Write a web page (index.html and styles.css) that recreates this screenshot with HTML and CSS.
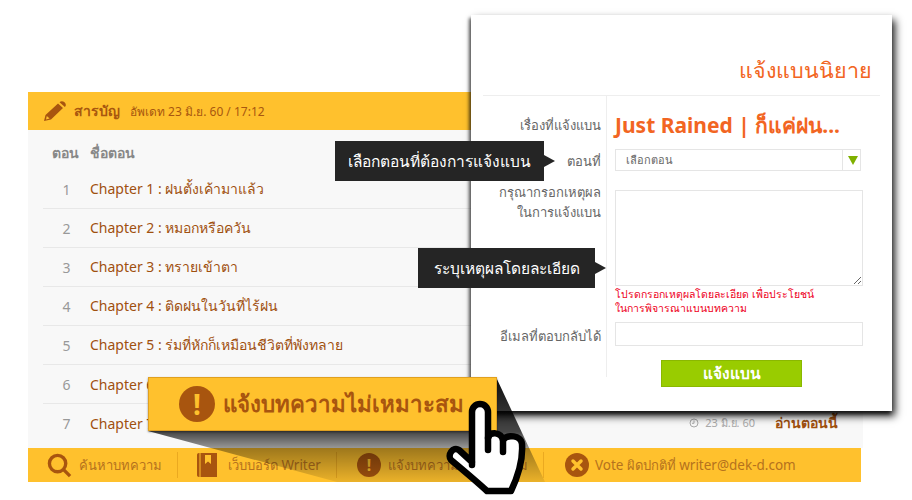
FILE: index.html
```html
<!DOCTYPE html>
<html lang="en">
<head>
    <meta charset="UTF-8">
    <meta name="viewport" content="width=device-width, initial-scale=1.0">
    <title>แจ้งแบนนิยาย</title>
    <link rel="stylesheet" href="styles.css">
</head>
<body>

    <div class="toc">
        <div class="toc-head">
            <svg class="pen-icon" viewBox="0 0 22 20"><path d="M0 20l1.500-6L14 2.500 19 7 7 18.500zM15.500 1.200C17 -.2 19 0 20.500 1.300c1.500 1.400 1.900 3.300.4 4.700z"/><path class="pen-cut" d="M2 18.500l.8-3.500 2.800 2.500z"/></svg>
            <b>สารบัญ</b>
            <span>อัพเดท 23 มิ.ย. 60 / 17:12</span>
        </div>

        <div class="toc-body">
            <div class="toc-titles"><span class="col-num">ตอน</span><span>ชื่อตอน</span></div>
            <ol class="chapters">
                <li><span class="col-num">1</span><a>Chapter 1 : ฝนตั้งเค้ามาแล้ว</a></li>
                <li><span class="col-num">2</span><a>Chapter 2 : หมอกหรือควัน</a></li>
                <li><span class="col-num">3</span><a>Chapter 3 : ทรายเข้าตา</a></li>
                <li><span class="col-num">4</span><a>Chapter 4 : ติดฝนในวันที่ไร้ฝน</a></li>
                <li><span class="col-num">5</span><a>Chapter 5 : ร่มที่หักก็เหมือนชีวิตที่พังทลาย</a></li>
                <li><span class="col-num">6</span><a>Chapter 6</a></li>
                <li>
                    <span class="col-num">7</span><a>Chapter 7</a>
                    <span class="date">
                        <svg class="clock-icon" viewBox="0 0 10 10"><circle cx="5" cy="5" r="4"/><path d="M5 2.500V5.300H3"/></svg>
                        23 มิ.ย. 60
                    </span>
                    <a class="read">อ่านตอนนี้</a>
                </li>
            </ol>
        </div>

        <div class="toc-foot">
            <div class="foot-item foot-search">
                <svg class="foot-icon" viewBox="0 0 26 26"><circle class="ring" cx="11" cy="11" r="8.500"/><path class="ring" d="M17.500 17.500L24 24"/></svg>
                ค้นหาบทความ
            </div>
            <div class="foot-item foot-board">
                <svg class="foot-icon book" viewBox="0 0 20 24"><path d="M0 2C0 .8.800 0 2 0h18v24H2c-1.200 0-2-.8-2-2z"/><path class="book-mark" d="M8 2h6v9l-3-2.500L8 11z"/><path class="book-line" d="M3 0v24"/></svg>
                <span>เว็บบอร์ด <span class="latin">Writer</span></span>
            </div>
            <div class="foot-item foot-report">
                <span class="round-icon small">!</span>
                แจ้งบทความไม่เหมาะสม
            </div>
            <div class="foot-item foot-vote">
                <svg class="foot-icon cross" viewBox="0 0 24 24"><circle cx="12" cy="12" r="12"/><path class="cross-mark" d="M8 8l8 8M16 8l-8 8"/></svg>
                <span><span class="latin">Vote</span> ผิดปกติที่ <span class="latin">writer@dek-d.com</span></span>
            </div>
        </div>
    </div>

    <div class="modal">
        <h2>แจ้งแบนนิยาย</h2>
        <div class="form">
            <label class="lbl lbl-story">เรื่องที่แจ้งแบน</label>
            <div class="story-name">Just Rained | ก็แค่ฝน...</div>

            <label class="lbl lbl-select">ตอนที่</label>
            <div class="select-box">
                <span>เลือกตอน</span>
                <i class="select-arrow"></i>
            </div>

            <label class="lbl lbl-reason">กรุณากรอกเหตุผล<br>ในการแจ้งแบน</label>
            <div>
                <textarea class="reason"></textarea>
                <p class="warn">โปรดกรอกเหตุผลโดยละเอียด เพื่อประโยชน์<br>ในการพิจารณาแบนบทความ</p>
            </div>

            <label class="lbl lbl-mail">อีเมลที่ตอบกลับได้</label>
            <input class="mail" type="text">
        </div>
        <button class="ban-button">แจ้งแบน</button>
    </div>

    <div class="tip tip-select">เลือกตอนที่ต้องการแจ้งแบน</div>
    <div class="tip tip-reason">ระบุเหตุผลโดยละเอียด</div>

    <div class="fold"></div>
    <div class="banner">
        <span class="round-icon">!</span>
        แจ้งบทความไม่เหมาะสม
    </div>

    <svg class="hand" viewBox="0 0 85 100">
        <path d="M27 65V12A8 8 0 0 1 43 12V38C45 31 56 32 58 40C62 34 76 35 77 44C78 58 74 74 66 91H42C30 80 18 70 6 60C2 55 8 46 14 50L27 62"/>
        <path d="M43 38V50M58 40V52"/>
    </svg>

</body>
</html>
```

FILE: styles.css
```css
body {
    margin: 0;
    padding: 92px 0 0 28px;
    height: 500px;
    box-sizing: border-box;
    overflow: hidden;
    position: relative;
    background: #fff;
    font-family: Tahoma, "Noto Sans", "DejaVu Sans", sans-serif;
    font-size: 14px;
    color: #666;
}

.toc {
    width: 835px;
}

.toc-head {
    height: 38px;
    padding-left: 16px;
    display: flex;
    align-items: center;
    background: #ffc12d;
    color: #a8570f;
    font-size: 12px;
}

.toc-head b {
    font-size: 14px;
    margin: 0 10px 0 8px;
}

.pen-icon {
    width: 22px;
    height: 20px;
    fill: #a8550f;
}

.pen-cut {
    fill: #ffc12d;
}

.toc-body {
    height: 318px;
    padding: 0 25px 0 15px;
    background: #f8f8f8;
}

.toc-titles {
    height: 46px;
    display: flex;
    align-items: center;
    font-weight: bold;
    color: #888;
}

.col-num {
    width: 47px;
    text-align: center;
    flex: none;
}

.toc-titles .col-num {
    text-align: left;
    padding-left: 9px;
    box-sizing: border-box;
}

.chapters {
    list-style: none;
    margin: -6px 0 0;
    padding: 0;
}

.chapters li {
    height: 38px;
    display: flex;
    align-items: center;
    border-bottom: 1px solid #e8e8e8;
    color: #999;
}

.chapters li:last-child {
    border-bottom: none;
}

.chapters a {
    color: #a0500f;
}

.date {
    margin-left: auto;
    display: flex;
    align-items: center;
    gap: 6px;
    font-size: 11px;
    color: #aaa;
}

.clock-icon {
    width: 10px;
    height: 10px;
    fill: none;
    stroke: #aaa;
}

.chapters .read {
    margin-left: 20px;
    font-weight: bold;
}

.toc-foot {
    width: 833px;
    height: 34px;
    display: flex;
    align-items: center;
    background: #ffc12d;
    color: #b5721d;
    font-size: 13px;
}

.latin {
    font-size: 13.5px;
}

.foot-item {
    height: 26px;
    display: flex;
    align-items: center;
    gap: 7px;
    box-sizing: border-box;
    border-right: 1px solid #eba920;
}

.foot-search {
    padding: 0 15px 0 19px;
}

.foot-board {
    padding: 0 15px 0 19px;
}

.foot-report {
    padding: 0 15px 0 20px;
}

.foot-vote {
    padding: 0 0 0 21px;
    gap: 6px;
    border-right: none;
}

.foot-icon {
    width: 25px;
    height: 25px;
}

.foot-icon .ring {
    fill: none;
    stroke: #a8550f;
    stroke-width: 3.500;
}

.foot-icon.book {
    width: 20px;
    height: 24px;
    margin-right: 4px;
    fill: #a8550f;
}

.foot-icon.cross {
    width: 24px;
    height: 24px;
    fill: #a8550f;
}

.cross-mark {
    fill: none;
    stroke: #ffc12d;
    stroke-width: 3.500;
    stroke-linecap: round;
}

.book-mark {
    fill: #ffc12d;
}

.book-line {
    stroke: #ffc12d;
    fill: none;
}

.round-icon {
    width: 36px;
    height: 36px;
    border-radius: 50%;
    display: flex;
    align-items: center;
    justify-content: center;
    flex: none;
    background: #a8550f;
    color: #ffc12d;
    font-size: 28px;
    font-weight: bold;
}

.round-icon.small {
    width: 24px;
    height: 24px;
    font-size: 16px;
}

/* popup over the table of contents */
.modal {
    position: absolute;
    left: 471px;
    top: 15px;
    width: 421px;
    height: 396px;
    box-sizing: border-box;
    padding: 0 12px;
    background: #fff;
    box-shadow: 3px 5px 8px rgba(0, 0, 0, 0.9), -2px 3px 3px rgba(0, 0, 0, 0.55);
}

.modal h2 {
    height: 81px;
    width: 397px;
    margin: 0;
    padding: 38px 8px 0 0;
    box-sizing: border-box;
    border-bottom: 1px solid #eee;
    text-align: right;
    font-size: 21.500px;
    font-weight: normal;
    color: #f26522;
}

.form {
    display: grid;
    grid-template-columns: 124px 1fr;
    width: 397px;
}

.lbl {
    padding-right: 5px;
    box-sizing: border-box;
    text-align: right;
    border-right: 1px solid #eee;
    font-size: 13px;
    line-height: 20px;
}

.lbl-story {
    padding-top: 19px;
    height: 38px;
}

.lbl-select {
    padding-top: 17px;
}

.lbl-reason {
    padding-top: 11px;
}

.lbl-mail {
    padding-top: 4px;
    height: 55px;
}

.story-name {
    margin-left: 8px;
    padding-top: 13px;
    height: 38px;
    box-sizing: border-box;
    font-size: 21px;
    font-weight: bold;
    color: #f26522;
    white-space: nowrap;
}

.select-box {
    margin: 15px 0 0 8px;
    width: 246px;
    height: 22px;
    box-sizing: border-box;
    border: 1px solid #e5e5e5;
    display: flex;
    align-items: center;
    justify-content: space-between;
    padding-left: 10px;
    font-size: 11px;
}

.select-arrow {
    width: 18px;
    height: 20px;
    box-sizing: border-box;
    border-left: 1px solid #e5e5e5;
    position: relative;
}

.select-arrow::after {
    content: "";
    position: absolute;
    left: 5px;
    top: 6px;
    border: 5px solid transparent;
    border-top: 9px solid #7fb000;
    border-bottom: none;
}

.reason {
    display: block;
    margin: 19px 0 0 8px;
    width: 248px;
    height: 96px;
    box-sizing: border-box;
    border: 1px solid #e5e5e5;
}

.warn {
    margin: 1px 0 0 8px;
    height: 35px;
    font-size: 10.500px;
    line-height: 14px;
    color: #ee0022;
    white-space: nowrap;
}

.mail {
    margin: 0 0 0 8px;
    width: 248px;
    height: 24px;
    box-sizing: border-box;
    border: 1px solid #e5e5e5;
}

.ban-button {
    display: block;
    margin: -17px 0 0 178px;
    width: 141px;
    height: 27px;
    position: relative;
    border: 1px solid #8ab800;
    background: #99cc00;
    color: #fff;
    font-family: inherit;
    font-size: 15.500px;
    font-weight: bold;
    padding: 0;
}

.tip {
    position: absolute;
    height: 40px;
    line-height: 40px;
    box-sizing: border-box;
    background: #252525;
    color: #fff;
    font-size: 15.500px;
    text-align: center;
    white-space: nowrap;
}

.tip::after {
    content: "";
    position: absolute;
    left: 100%;
    top: 14px;
    border: 6px solid transparent;
    border-left: 11px solid #252525;
    border-right: none;
}

.tip-select {
    left: 335px;
    top: 141px;
    width: 209px;
}

.tip-reason {
    left: 418px;
    top: 248px;
    width: 177px;
}

.banner {
    position: absolute;
    left: 148px;
    top: 377px;
    width: 349px;
    height: 54px;
    box-sizing: border-box;
    display: flex;
    align-items: center;
    gap: 8px;
    padding-left: 30px;
    background: #ffc12d;
    border: 1px solid #e0a020;
    color: #a8550f;
    font-size: 22.300px;
    font-weight: bold;
    white-space: nowrap;
    box-shadow: 0 1px 2px rgba(0, 0, 0, 0.4);
}

.fold {
    position: absolute;
    left: 148px;
    top: 377px;
    width: 397px;
    height: 105px;
    clip-path: polygon(0 54px, 348px 0, 397px 105px, 189px 105px);
    background: linear-gradient(rgba(0, 0, 0, 0.95), rgba(0, 0, 0, 0.72) 52%, rgba(0, 0, 0, 0.38) 68%, rgba(0, 0, 0, 0.08));
}

.hand {
    position: absolute;
    left: 445px;
    top: 400px;
    width: 85px;
    height: 100px;
    fill: #fff;
    stroke: #000;
    stroke-width: 6.500;
    stroke-linecap: round;
    stroke-linejoin: round;
}
```
